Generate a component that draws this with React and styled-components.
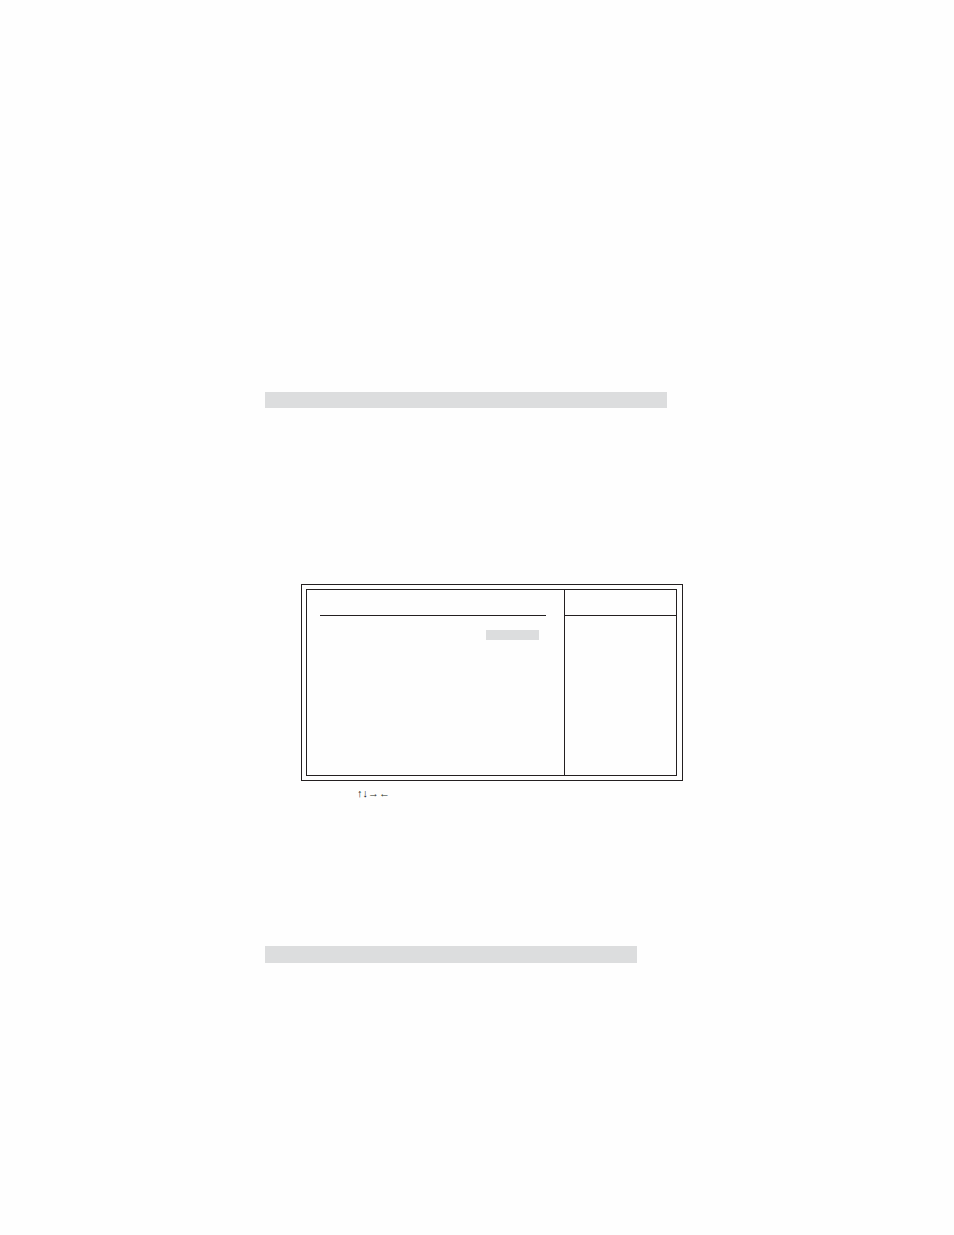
import React from "react";
import styled, { createGlobalStyle } from "styled-components";

const INK = "#231f20";
const SHADE = "#dcddde";

const GlobalStyle = createGlobalStyle`
    * {
        box-sizing: border-box;
    }
    body {
        margin: 0;
        background: #fefefe;
        color: ${INK};
        font-family: "Liberation Sans", Arial, sans-serif;
        -webkit-font-smoothing: antialiased;
    }
`

const Page = styled.main`
    display: flex;
    flex-direction: column;
    padding: 392px 24px 272px 265px;
`

const HeadingBar = styled.div`
    width: 100%;
    max-width: ${props => props.$width}px;
    height: ${props => props.$height}px;
    background: ${SHADE};
`

const Setup = styled.section`
    margin: 176px 0 145px;
    padding-left: 36px;
`

const Frame = styled.div`
    width: 100%;
    max-width: 382px;
    padding: 4px 5px 4px 4px;
    border: 1px solid ${INK};
`

const Panels = styled.div`
    display: grid;
    grid-template-columns: minmax(0, 1fr) 112px;
    min-height: 187px;
    border: 1px solid ${INK};
`

const Options = styled.div`
    padding: 0 18px 0 13px;
`

const PanelHeader = styled.div`
    height: 26px;
    border-bottom: 1px solid ${INK};
`

const SelectedValue = styled.div`
    width: 53px;
    height: 10px;
    margin: 14px 7px 0 auto;
    background: ${SHADE};
`

const Help = styled.aside`
    border-left: 1px solid ${INK};
`

const Keys = styled.p`
    margin: 4px 0 0;
    padding-left: 56px;
    font-size: 11px;
    line-height: 16px;
`

export default function App(){
    return(
        <>
            <GlobalStyle/>
            <Page>
                <HeadingBar $width={402} $height={16}/>
                <Setup>
                    <Frame>
                        <Panels>
                            <Options>
                                <PanelHeader/>
                                <SelectedValue/>
                            </Options>
                            <Help>
                                <PanelHeader/>
                            </Help>
                        </Panels>
                    </Frame>
                    <Keys>↑↓→←</Keys>
                </Setup>
                <HeadingBar $width={372} $height={17}/>
            </Page>
        </>
    )
}
